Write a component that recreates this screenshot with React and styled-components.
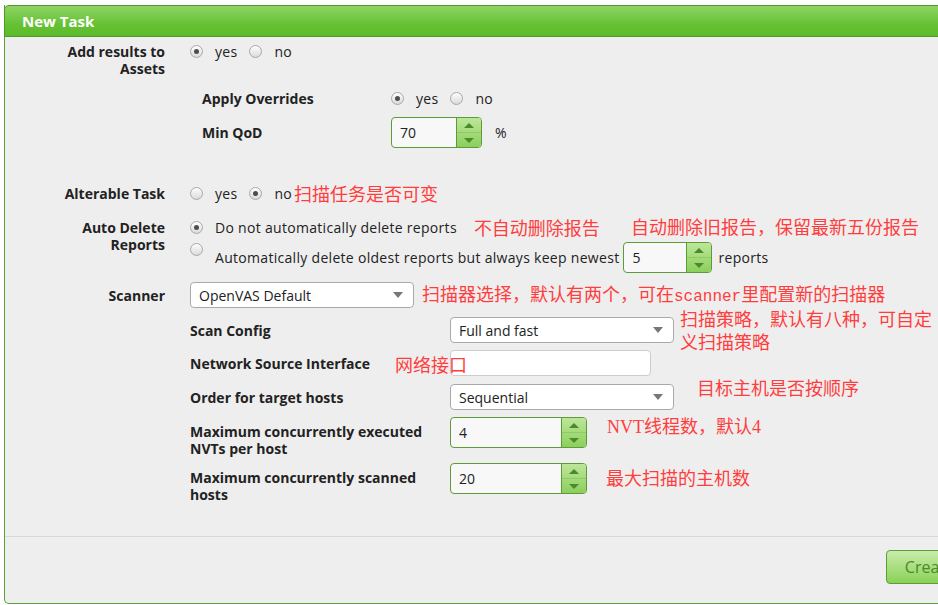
import React from 'react';
import styled, { createGlobalStyle } from 'styled-components';

const GlobalStyle = createGlobalStyle`
  html, body {
    margin: 0;
    padding: 0;
    background: #ffffff;
    overflow: hidden;
  }
  body {
    font-family: "Open Sans", "DejaVu Sans", sans-serif;
    font-size: 14px;
    letter-spacing: 0.3px;
    color: #222;
  }
`;

const Dialog = styled.div`
  margin: 5px 0 0 4px;
  width: 982px;
  height: 599px;
  display: flex;
  flex-direction: column;
  background: #eeeeee;
  border-left: 1px solid #5aa032;
  border-bottom: 1px solid #5aa032;
  border-bottom-left-radius: 5px;
  box-sizing: border-box;
`;

const Header = styled.div`
  height: 32px;
  box-sizing: border-box;
  margin-left: -1px;
  display: flex;
  align-items: center;
  padding-left: 17px;
  background: linear-gradient(#8fd466, #66c234 60%, #5cbc2a);
  border: 1px solid #4e9a28;
  border-radius: 5px 5px 0 0;
  color: #fff;
  font-weight: 700;
  font-size: 15px;
  letter-spacing: 0;
`;

const Body = styled.div`
  position: relative;
  flex: 1;
  padding-top: 6px;
`;

const Row = styled.div`
  display: grid;
  grid-template-columns: 160px 1fr;
  column-gap: 25px;
  align-items: ${p => p.$align || 'start'};
  margin-top: ${p => p.$gap || 0}px;
  line-height: 17px;
`;

const Label = styled.div`
  text-align: right;
  font-weight: 700;
  letter-spacing: 0;
  line-height: 17px;
`;

const Value = styled.div`
  display: flex;
  flex-direction: column;
`;

const Line = styled.div`
  display: flex;
  align-items: ${p => p.$align || 'center'};
  margin-top: ${p => p.$gap || 0}px;
  height: ${p => (p.$h ? `${p.$h}px` : 'auto')};
`;

const Nested = styled.div`
  margin: 30px 0 0 12px;
  display: grid;
  grid-template-columns: 189px 1fr;
  row-gap: 10px;
  align-items: center;
`;

const SubLabel = styled.div`
  font-weight: 700;
  letter-spacing: 0;
  line-height: 17px;
  padding-top: ${p => p.$pt || 0}px;
`;

const Option = styled.label`
  display: inline-flex;
  align-items: center;
  margin-right: ${p => (p.$last ? 0 : 12)}px;
  white-space: nowrap;
`;

const Radio = styled.span`
  display: inline-block;
  position: relative;
  width: 13px;
  height: 13px;
  box-sizing: border-box;
  border-radius: 50%;
  border: 1px solid #a8a8a8;
  background: linear-gradient(#fefefe, #dadada);
  margin-right: 12px;
  flex-shrink: 0;
  align-self: ${p => (p.$top ? 'flex-start' : 'center')};
  margin-top: ${p => (p.$top ? '1px' : '0')};

  &::after {
    content: '';
    display: ${p => (p.$checked ? 'block' : 'none')};
    position: absolute;
    left: 3px;
    top: 3px;
    width: 5px;
    height: 5px;
    border-radius: 50%;
    background: #4d4d4d;
  }
`;

const SpinBox = styled.div`
  display: inline-flex;
  width: ${p => p.$w}px;
  height: 31px;
  box-sizing: border-box;
  border: 1px solid #5c9c36;
  border-radius: 4px;
  overflow: hidden;
  background: #f8f8f8;
`;

const SpinValue = styled.div`
  flex: 1;
  padding-left: 8px;
  font-size: 14px;
  letter-spacing: 0;
  line-height: 29px;
  color: #222;
`;

const SpinButtons = styled.div`
  width: 24px;
  border-left: 1px solid #5c9c36;
  display: flex;
  flex-direction: column;
  background: linear-gradient(#bde699, #8ccf5c);
`;

const SpinHalf = styled.div`
  flex: 1;
  display: flex;
  align-items: center;
  justify-content: center;
  & + & {
    border-top: 1px solid rgba(90, 150, 50, 0.25);
  }
`;

const Tri = styled.span`
  width: 0;
  height: 0;
  border-left: 5px solid transparent;
  border-right: 5px solid transparent;
  ${p => (p.$down
    ? 'border-top: 5px solid #4b8a2c;'
    : 'border-bottom: 5px solid #4b8a2c;')}
`;

const Unit = styled.span`
  display: inline-flex;
  margin-left: ${p => p.$ml || 6}px;
`;

const Select = styled.div`
  width: ${p => p.$w}px;
  height: 26px;
  box-sizing: border-box;
  border: 1px solid #aaaaaa;
  border-radius: 4px;
  background: #ffffff;
  padding: 0 10px 0 8px;
  display: flex;
  align-items: center;
  justify-content: space-between;
  font-size: 14px;
  letter-spacing: 0;
  color: #222;
  flex-shrink: 0;
`;

const Caret = styled.span`
  width: 0;
  height: 0;
  border-left: 5px solid transparent;
  border-right: 5px solid transparent;
  border-top: 6px solid #777;
`;

const TextInput = styled.div`
  width: ${p => p.$w}px;
  height: 26px;
  box-sizing: border-box;
  border: 1px solid #cccccc;
  border-radius: 4px;
  background: #ffffff;
`;

const Sub = styled.div`
  display: grid;
  grid-template-columns: 260px 1fr;
  align-items: ${p => p.$align || 'center'};
  margin-top: ${p => p.$gap || 0}px;
`;

const Note = styled.span`
  color: #ff3d3d;
  font-family: "Noto Sans CJK SC", sans-serif;
  font-size: 18px;
  letter-spacing: 0;
  line-height: ${p => p.$lh || 17}px;
  white-space: ${p => (p.$w ? 'normal' : 'nowrap')};
  width: ${p => (p.$w ? `${p.$w}px` : 'auto')};
  flex-shrink: 0;
  margin-left: ${p => p.$ml || 0}px;
`;

const FloatNote = styled(Note)`
  position: absolute;
  left: ${p => p.$x}px;
  top: ${p => p.$y}px;
  line-height: 24px;
  margin: 0;
`;

const Mono = styled.span`
  font-family: "Liberation Mono", monospace;
  font-size: 16px;
`;

const Serif = styled.span`
  font-family: "Liberation Serif", serif;
`;

const Footer = styled.div`
  height: 67px;
  border-top: 1px solid #d9d9d9;
  display: flex;
  justify-content: flex-end;
  align-items: flex-start;
  padding: 13px 13px 0 0;
  box-sizing: border-box;
`;

const CreateButton = styled.button`
  height: 34px;
  padding: 0 18px;
  font-family: "Open Sans", sans-serif;
  font-size: 16px;
  color: #4a8a28;
  background: linear-gradient(#c9ecad, #8ad156);
  border: 1px solid #5c9e36;
  border-radius: 4px;
`;

const RadioPair = ({ yes }) => (
  <>
    <Option><Radio $checked={yes} />yes</Option>
    <Option $last><Radio $checked={!yes} />no</Option>
  </>
);

const Spinner = ({ w, value }) => (
  <SpinBox $w={w}>
    <SpinValue>{value}</SpinValue>
    <SpinButtons>
      <SpinHalf><Tri /></SpinHalf>
      <SpinHalf><Tri $down /></SpinHalf>
    </SpinButtons>
  </SpinBox>
);

const Dropdown = ({ w, children }) => (
  <Select $w={w}>
    <span>{children}</span>
    <Caret />
  </Select>
);

export default function App() {
  return (
    <>
      <GlobalStyle />
      <Dialog>
        <Header>New Task</Header>
        <Body>
          <Row>
            <Label>Add results to<br />Assets</Label>
            <Value>
              <Line><RadioPair yes /></Line>
              <Nested>
                <SubLabel>Apply Overrides</SubLabel>
                <Line><RadioPair yes /></Line>
                <SubLabel>Min QoD</SubLabel>
                <Line>
                  <Spinner w={91} value="70" />
                  <Unit $ml={13}>%</Unit>
                </Line>
              </Nested>
            </Value>
          </Row>

          <Row $gap={37}>
            <Label>Alterable Task</Label>
            <Line>
              <Option><Radio />yes</Option>
              <Option $last><Radio $checked />no</Option>
              <Note $ml={2}>扫描任务是否可变</Note>
            </Line>
          </Row>

          <Row $gap={17}>
            <Label>Auto Delete<br />Reports</Label>
            <Value>
              <Line>
                <Option $last><Radio $checked />Do not automatically delete reports</Option>
                <Note $ml={17}>不自动删除报告</Note>
              </Line>
              <Line $gap={6} $h={31}>
                <Radio $top />
                <span>Automatically delete oldest reports but always keep newest</span>
                <Unit $ml={4}><Spinner w={89} value="5" /></Unit>
                <Unit $ml={6}>reports</Unit>
              </Line>
            </Value>
          </Row>

          <Row $gap={8} $align="center">
            <Label>Scanner</Label>
            <Line>
              <Dropdown w={224}>OpenVAS Default</Dropdown>
              <Note $ml={8} $lh={24}>扫描器选择，默认有两个，可在<Mono>scanner</Mono>里配置新的扫描器</Note>
            </Line>
          </Row>

          <Row>
            <span />
            <Value>
              <Sub $gap={8}>
                <SubLabel>Scan Config</SubLabel>
                <Line $h={26}>
                  <Dropdown w={224}>Full and fast</Dropdown>
                  <Note $ml={6} $lh={23} $w={256}>扫描策略，默认有八种，可自定义扫描策略</Note>
                </Line>
              </Sub>
              <Sub $gap={7}>
                <SubLabel>Network Source Interface</SubLabel>
                <Line><TextInput $w={201} /></Line>
              </Sub>
              <Sub $gap={8}>
                <SubLabel>Order for target hosts</SubLabel>
                <Line><Dropdown w={224}>Sequential</Dropdown></Line>
              </Sub>
              <Sub $gap={7} $align="start">
                <SubLabel $pt={6}>Maximum concurrently executed<br />NVTs per host</SubLabel>
                <Line><Spinner w={137} value="4" /></Line>
              </Sub>
              <Sub $gap={6} $align="start">
                <SubLabel $pt={6}>Maximum concurrently scanned<br />hosts</SubLabel>
                <Line><Spinner w={137} value="20" /></Line>
              </Sub>
            </Value>
          </Row>

          <FloatNote $x={626} $y={177}>自动删除旧报告，保留最新五份报告</FloatNote>
          <FloatNote $x={390} $y={315}>网络接口</FloatNote>
          <FloatNote $x={692} $y={338}>目标主机是否按顺序</FloatNote>
          <FloatNote $x={602} $y={376}><Serif>NVT</Serif>线程数，默认<Serif>4</Serif></FloatNote>
          <FloatNote $x={601} $y={428}>最大扫描的主机数</FloatNote>
        </Body>
        <Footer>
          <CreateButton>Create</CreateButton>
        </Footer>
      </Dialog>
    </>
  );
}
